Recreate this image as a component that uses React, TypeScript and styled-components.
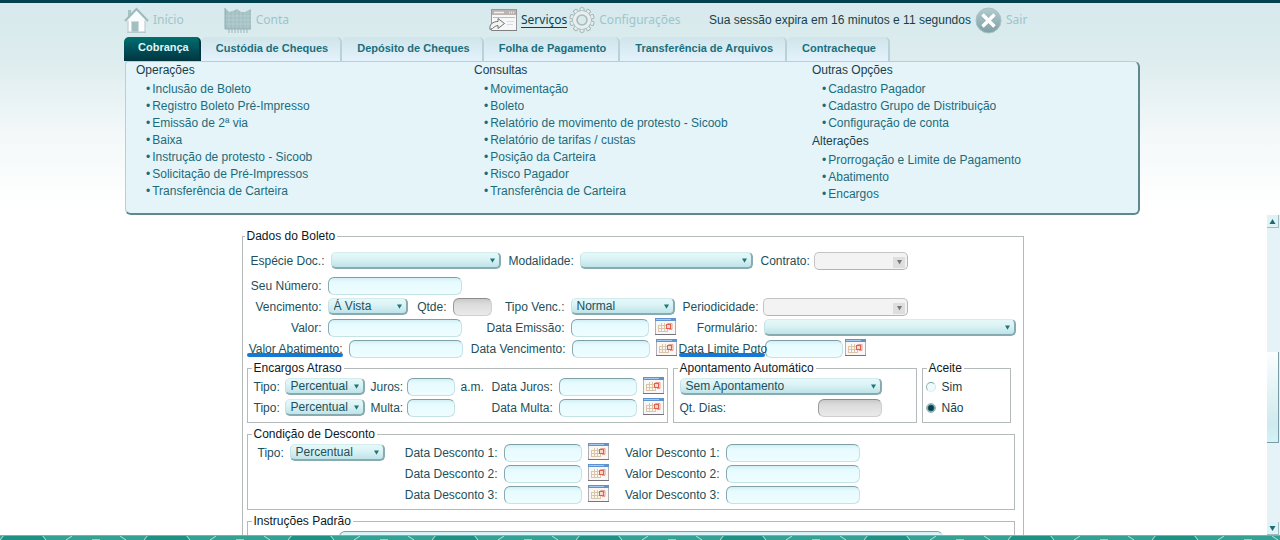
import React, { useId, useState } from 'react';
import styled, { createGlobalStyle, css } from 'styled-components';

const GlobalStyle = createGlobalStyle`
  *, *::before, *::after { box-sizing: border-box; }
  body {
    margin: 0;
    background: #fff;
    color: #21505c;
    font: 12px/14px "Liberation Sans", Arial, sans-serif;
  }
  button, input, select { font: inherit; color: inherit; }
`;

const Page = styled.div`
  display: flex;
  flex-direction: column;
  height: 100vh;
  overflow: hidden;
  border-top: 3px solid #00434f;
  background: linear-gradient(#d6e9ec, #deedef 60px, #f3f8f9 130px, #fff 205px);
`;

const Header = styled.header`
  flex: none;
  padding: 0 16px 0 0;
`;

const HeaderInner = styled.div`
  max-width: 1016px;
  margin: 0 auto;
`;

const TopNav = styled.nav`
  display: flex;
  align-items: center;
  height: 34px;
`;

const NavGroup = styled.div<{ $gap: number; $width: number }>`
  display: flex;
  align-items: center;
  gap: ${(p) => p.$gap}px;
  width: ${(p) => p.$width}px;
`;

const NavLink = styled.a<{ $active?: boolean }>`
  display: flex;
  align-items: center;
  gap: 4px;
  color: #9cc6cb;
  font: 12px/15px "Noto Sans", "Open Sans", sans-serif;
  text-decoration: none;
  white-space: nowrap;
  span {
    color: ${(p) => (p.$active ? '#0b4352' : 'inherit')};
    border-bottom: 1px solid ${(p) => (p.$active ? '#0b4352' : 'transparent')};
  }
`;

const Session = styled.span`
  width: 266px;
  color: #173f4b;
  white-space: nowrap;
`;

const Tabs = styled.div`
  display: flex;
  height: 24px;
`;

const Tab = styled.button<{ $active?: boolean }>`
  border: 0;
  border-right: 2px solid #b9d2d9;
  border-radius: 5px 5px 0 0;
  padding: 0 12px 2px 15px;
  background: linear-gradient(#cfe5ea, #e4f2fc);
  color: #1b6f7c;
  font-size: 11px;
  font-weight: bold;
  white-space: nowrap;
  ${(p) =>
    p.$active &&
    css`
      border-right-color: #003640;
      padding: 0 10px 5px 14px;
      background: linear-gradient(#00706f, #004b55 60%, #003640);
      color: #e3f4f6;
    `}
`;

const MenuPanel = styled.div`
  display: grid;
  grid-template-columns: 338fr 338fr 336fr;
  height: 154px;
  margin-left: 1px;
  background: #e5f4f9;
  border: solid #b5d0d6;
  border-width: 1px 2px 2px 1px;
  border-right-color: #5f888e;
  border-bottom-color: #5f888e;
  border-radius: 3px 6px 6px 6px;
`;

const MenuColumn = styled.div`
  padding-left: 10px;
`;

const MenuHeading = styled.h2`
  margin: 0 0 2px;
  font-size: 12px;
  line-height: 17px;
  font-weight: normal;
  color: #173f4b;
`;

const MenuList = styled.ul`
  margin: 0 0 1px;
  padding: 0 0 0 10px;
  list-style: none;
  line-height: 17px;
`;

const MenuLink = styled.a`
  display: flex;
  gap: 2px;
  color: #1b6c7a;
  text-decoration: none;
`;

const Body = styled.div`
  display: flex;
  flex: 1;
  min-height: 0;
`;

const FormArea = styled.main`
  flex: 1;
  min-width: 0;
  overflow: hidden;
  padding: 14px 2px 0 0;
`;

const Group = styled.fieldset`
  min-width: 0;
  margin: 0;
  padding: 1px 0 4px 6px;
  border: 1px solid #b4b9ba;
`;

const MainGroup = styled(Group)`
  max-width: 782px;
  margin: 0 auto;
  padding: 7px 8px 0 4px;
`;

const Legend = styled.legend`
  margin-left: -2px;
  padding: 0 2px;
  color: #0c1a1f;
`;

const Row = styled.div<{ $gap?: number; $after?: number }>`
  display: flex;
  align-items: center;
  gap: ${(p) => p.$gap ?? 8}px;
  height: 21px;
  margin-bottom: ${(p) => p.$after ?? 0}px;
`;

const GroupRow = styled.div`
  display: grid;
  grid-template-columns: 421fr 244fr 89fr;
  gap: 5px;
  margin: 2px 4px 4px 0;
`;

const Section = styled(Group)`
  margin-bottom: 4px;
`;

const DiscountLayout = styled.div`
  display: flex;
  align-items: flex-start;
  gap: 8px;
  padding-left: 4px;
`;

const FieldBox = styled.div<{ $gap: number }>`
  display: flex;
  align-items: center;
  gap: ${(p) => p.$gap}px;
`;

const Label = styled.label<{ $width?: number; $marked?: boolean }>`
  position: relative;
  width: ${(p) => (p.$width ? `${p.$width}px` : 'auto')};
  text-align: right;
  white-space: nowrap;
  ${(p) =>
    p.$marked &&
    css`
      &::after {
        content: '';
        position: absolute;
        left: 0;
        right: 0;
        bottom: -1px;
        height: 4px;
        border-radius: 2px;
        background: #1378d6;
      }
    `}
`;

const TextBox = styled.input<{ $width: number }>`
  width: ${(p) => p.$width}px;
  height: 18px;
  padding: 0 5px;
  border: 1px solid;
  border-color: #7d9fa5 #c3e3e6 #c3e3e6 #86aab0;
  border-radius: 6px;
  background: linear-gradient(#d3eff3, #e6fbff 4px, #effdff);
  &:disabled {
    border-color: #8c8c8c #cfcfcf #cfcfcf #9a9a9a;
    background: linear-gradient(#c9c9c9, #dcdcdc 5px, #eaeaea);
  }
`;

const SelectWrap = styled.span<{ $width: number }>`
  position: relative;
  width: ${(p) => p.$width}px;
  svg {
    position: absolute;
    right: 6px;
    top: 6px;
    pointer-events: none;
  }
`;

const DisabledSelectWrap = styled(SelectWrap)`
  svg {
    right: 3px;
    top: 5px;
  }
`;

const SelectBox = styled.select`
  display: block;
  width: 100%;
  height: 17px;
  padding: 0 5px;
  appearance: none;
  border: solid;
  border-width: 1px 2px 2px 1px;
  border-color: #d3ecee #86abb1 #86abb1 #c4e2e5;
  border-radius: 5px;
  background: linear-gradient(#e6f8f9, #dcf3f5 40%, #bfe3e8);
  line-height: 14px;
  &:disabled {
    height: 18px;
    border-width: 1px;
    border-color: #c4c4c4 #b4b4b4 #b4b4b4 #c4c4c4;
    background: #f3f3f3;
    opacity: 1;
  }
`;

const CalendarButton = styled.button`
  height: 19px;
  padding: 0 0 2px;
  border: 0;
  background: none;
  svg { display: block; }
`;

const Unit = styled.span`
  width: 25px;
`;

const Spread = styled.div`
  display: flex;
  align-items: center;
  justify-content: space-between;
  width: 202px;
`;

const RadioLabel = styled.label`
  display: flex;
  align-items: center;
  gap: 6px;
  margin-left: -3px;
  color: #173f4b;
`;

const Radio = styled.input`
  appearance: none;
  width: 10px;
  height: 10px;
  margin: 0;
  border: 1px solid;
  border-color: #7fa3a9 #cfe8ea #d6eef0 #8fb3b8;
  border-radius: 50%;
  background: #eefbfd;
  &:checked {
    border-color: #8fb3b8;
    background: radial-gradient(circle, #0b3e4a 0 2px, #2b6570 3px, #c5e3e7 4px);
  }
`;

const Instruction = styled.div`
  padding: 2px 71px 0 85px;
`;

const InstructionBox = styled(TextBox)`
  display: block;
  width: 100%;
`;

const Scrollbar = styled.div`
  display: flex;
  flex-direction: column;
  flex: none;
  width: 13px;
  background: #e5f3f8;
`;

const ScrollButton = styled.button`
  display: flex;
  align-items: center;
  justify-content: center;
  flex: none;
  width: 12px;
  height: 13px;
  padding: 0;
  border: solid #9fbcc2;
  border-width: 0 1px 1px 0;
  background: #dff2f5;
`;

const ScrollSpace = styled.div<{ $share: number }>`
  flex: ${(p) => p.$share};
`;

const ScrollThumb = styled.div`
  flex: 91;
  width: 12px;
  border: solid #7a9ba3;
  border-width: 0 1px 1px 0;
  background: linear-gradient(#fbfefe, #cfeaee 80%, #d2f3f6);
`;

const Footer = styled.footer`
  flex: none;
  height: 5px;
  svg { display: block; }
`;

function HomeIcon() {
  return (
    <svg width="25" height="26" viewBox="0 0 25 26" aria-hidden="true">
      <path d="M4 12h17v13H4z" fill="#fcfdfd" stroke="#b5c8ca" />
      <path d="M4 3h3v7H4z" fill="#a9c2c4" />
      <path d="M12.500 2.500 23 13.500H2z" fill="#f8fcfc" />
      <path d="M1 14 12.500 2 24 14" fill="none" stroke="#9fbabd" strokeWidth="2.200" />
      <path d="M7.500 14.500h7v10.500h-7z" fill="#a4bfc1" stroke="#cfdcdd" />
      <path d="M3 25.500h19" stroke="#b4cccd" />
    </svg>
  );
}

function AccountIcon() {
  return (
    <svg width="28" height="28" viewBox="0 0 28 28" aria-hidden="true">
      <path d="M1 2 5 6 9 5l4-2 4 3 4 0 6-3v20H1z" fill="#a3bfc2" />
      <path d="M1 10h26M1 14h26M1 18h26M5 6v17M9 5v18M13 4v19M17 6v17M21 6v17M24 5v18" stroke="#b4cdcf" />
      <path d="M1 2v21h26" fill="none" stroke="#8fafb2" />
      <path d="M5 23v4M8 23v4M11 23v4M14 23v4M17 23v4M20 23v4M23 23v4" stroke="#9ab6b9" />
    </svg>
  );
}

function ServicesIcon() {
  return (
    <svg width="28" height="24" viewBox="0 0 28 24" aria-hidden="true">
      <rect x="2.500" y="1.500" width="25" height="21" fill="#f7f7f8" stroke="#97999b" />
      <path d="M3 2h24v5H3z" fill="#b9b4b2" />
      <path d="M5 4.500h10M20 4.500h1M22 4.500h1M24 4.500h1" stroke="#f1eeee" strokeWidth="1.500" />
      <path d="M4 9.500h22" stroke="#a9c0e4" />
      <path d="M18 13.500h7M18 16.500h6" stroke="#d5daee" />
      <path d="M3 22.500h25" stroke="#7c7e80" />
      <path d="M1 21.500c-1-5 3-8 8-8v-3l6.500 5-6.500 5v-3c-3.500 0-4 3-8 4z" fill="#f4f4f4" stroke="#6f7375" />
    </svg>
  );
}

function GearIcon() {
  const teeth = Array.from({ length: 10 }, (_, i) => i * 36);
  return (
    <svg width="26" height="26" viewBox="0 0 26 26" aria-hidden="true">
      {teeth.map((angle) => (
        <rect key={angle} x="11" y="0.700" width="4" height="6" rx="1" fill="#e8eff0" stroke="#a2b5b7" transform={`rotate(${angle} 13 13)`} />
      ))}
      <circle cx="13" cy="13" r="9.200" fill="none" stroke="#a2b5b7" />
      <circle cx="13" cy="13" r="9" fill="#e8eff0" />
      <circle cx="13" cy="13" r="5" fill="#d9eaec" stroke="#a9babc" strokeWidth="1.600" />
    </svg>
  );
}

function ExitIcon() {
  return (
    <svg width="27" height="27" viewBox="0 0 27 27" aria-hidden="true">
      <defs>
        <linearGradient id="exit-fill" x2="0" y2="1">
          <stop stopColor="#b4cccf" />
          <stop offset="1" stopColor="#7d9fa5" />
        </linearGradient>
      </defs>
      <circle cx="13.500" cy="13.500" r="12.500" fill="url(#exit-fill)" stroke="#a7c2c5" />
      <path d="m7.500 7.500 12 12M19.500 7.500l-12 12" stroke="#fff" strokeWidth="3.400" />
    </svg>
  );
}

function CalendarIcon() {
  return (
    <svg width="21" height="17" viewBox="0 0 21 17" aria-hidden="true">
      <rect x=".5" y=".5" width="20" height="16" fill="#f8f6f6" stroke="#b3aeb4" />
      <path d="M0 0h21v3H0z" fill="#5c93d0" />
      <path d="M1 1.500h15" stroke="#a6c8ec" />
      <path d="M0 16.500h21" stroke="#77737a" />
      <path d="M3 7.500h14M3 10.500h14M3 13.500h10M3.500 7v7M6.500 5v9M9.500 5v9M12.500 5v9" fill="none" stroke="#dcc5a5" />
      <path d="M13 5.500h4v6h-3" fill="none" stroke="#e8a092" />
      <rect x="11.500" y="6.500" width="4" height="4" fill="#fbd5cf" stroke="#e0604e" />
    </svg>
  );
}

function Arrow({ disabled }: { disabled?: boolean }) {
  if (disabled) {
    return (
      <svg width="12" height="11" viewBox="0 0 12 11" aria-hidden="true">
        <path d="M0 0h12v11H0z" fill="#dedede" />
        <path d="M4 3h5L6.500 7.500z" fill="#777" />
      </svg>
    );
  }
  return (
    <svg width="5" height="5" viewBox="0 0 5 5" aria-hidden="true">
      <path d="M0 .5h5L2.500 4.800z" fill="#1b777b" />
    </svg>
  );
}

type FieldProps = {
  label: string;
  labelWidth?: number;
  width: number;
  options?: string[];
  disabled?: boolean;
  date?: boolean;
  marked?: boolean;
  gap?: number;
  children?: React.ReactNode;
};

function DateButton({ label }: { label: string }) {
  return (
    <CalendarButton type="button" aria-label={`Calendário ${label}`}>
      <CalendarIcon />
    </CalendarButton>
  );
}

function Field({ label, labelWidth, width, options, disabled, date, marked, gap = 6, children }: FieldProps) {
  const id = useId();
  const Wrap = disabled ? DisabledSelectWrap : SelectWrap;
  return (
    <FieldBox $gap={gap}>
      <Label htmlFor={id} $width={labelWidth} $marked={marked}>{label}</Label>
      {options ? (
        <Wrap $width={width}>
          <SelectBox id={id} disabled={disabled}>
            {options.map((o) => <option key={o}>{o}</option>)}
          </SelectBox>
          <Arrow disabled={disabled} />
        </Wrap>
      ) : (
        <TextBox id={id} $width={width} disabled={disabled} />
      )}
      {date && <DateButton label={label} />}
      {children}
    </FieldBox>
  );
}

const tabs = ['Cobrança', 'Custódia de Cheques', 'Depósito de Cheques', 'Folha de Pagamento', 'Transferência de Arquivos', 'Contracheque'];

const menu = [
  [{
    title: 'Operações',
    items: ['Inclusão de Boleto', 'Registro Boleto Pré-Impresso', 'Emissão de 2ª via', 'Baixa', 'Instrução de protesto - Sicoob', 'Solicitação de Pré-Impressos', 'Transferência de Carteira'],
  }],
  [{
    title: 'Consultas',
    items: ['Movimentação', 'Boleto', 'Relatório de movimento de protesto - Sicoob', 'Relatório de tarifas / custas', 'Posição da Carteira', 'Risco Pagador', 'Transferência de Carteira'],
  }],
  [
    { title: 'Outras Opções', items: ['Cadastro Pagador', 'Cadastro Grupo de Distribuição', 'Configuração de conta'] },
    { title: 'Alterações', items: ['Prorrogação e Limite de Pagamento', 'Abatimento', 'Encargos'] },
  ],
];

export default function App() {
  const [accept, setAccept] = useState('Não');
  const daysId = useId();
  return (
    <Page>
      <GlobalStyle />
      <Header>
        <HeaderInner>
          <TopNav>
            <NavGroup $gap={40} $width={365}>
              <NavLink href="#inicio"><HomeIcon /><span>Início</span></NavLink>
              <NavLink href="#conta"><AccountIcon /><span>Conta</span></NavLink>
            </NavGroup>
            <NavGroup $gap={2} $width={220}>
              <NavLink href="#servicos" $active><ServicesIcon /><span>Serviços</span></NavLink>
              <NavLink href="#configuracoes"><GearIcon /><span>Configurações</span></NavLink>
            </NavGroup>
            <Session>Sua sessão expira em 16 minutos e 11 segundos</Session>
            <NavLink href="#sair"><ExitIcon /><span>Sair</span></NavLink>
          </TopNav>
          <Tabs role="tablist">
            {tabs.map((t, i) => (
              <Tab key={t} type="button" role="tab" aria-selected={i === 0} $active={i === 0}>{t}</Tab>
            ))}
          </Tabs>
          <MenuPanel>
            {menu.map((column, i) => (
              <MenuColumn key={i}>
                {column.map((s) => (
                  <section key={s.title}>
                    <MenuHeading>{s.title}</MenuHeading>
                    <MenuList>
                      {s.items.map((item) => (
                        <li key={item}><MenuLink href="#menu"><span>•</span><span>{item}</span></MenuLink></li>
                      ))}
                    </MenuList>
                  </section>
                ))}
              </MenuColumn>
            ))}
          </MenuPanel>
        </HeaderInner>
      </Header>

      <Body>
        <FormArea>
          <MainGroup>
            <Legend>Dados do Boleto</Legend>
            <Row $after={4}>
              <Field label="Espécie Doc.:" labelWidth={78} width={170} options={['']} />
              <Field label="Modalidade:" labelWidth={65} width={173} options={['']} />
              <Field label="Contrato:" labelWidth={47} width={94} options={['']} disabled />
            </Row>
            <Row>
              <Field label="Seu Número:" labelWidth={75} width={134} />
            </Row>
            <Row>
              <Field label="Vencimento:" labelWidth={75} width={80} options={['Á Vista']} />
              <Field label="Qtde:" labelWidth={31} width={39} disabled />
              <Field label="Tipo Venc.:" labelWidth={65} width={104} options={['Normal']} />
              <Field label="Periodicidade:" labelWidth={74} width={145} options={['']} disabled />
            </Row>
            <Row>
              <Field label="Valor:" labelWidth={75} width={134} />
              <Field label="Data Emissão:" labelWidth={95} width={78} date />
              <Field label="Formulário:" labelWidth={74} width={252} options={['']} />
            </Row>
            <Row $gap={2}>
              <Field label="Valor Abatimento:" labelWidth={96} width={114} marked />
              <Field label="Data Vencimento:" labelWidth={101} width={78} date />
              <Field label="Data Limite Pgto" labelWidth={86} width={78} gap={0} marked />
              <DateButton label="Data Limite Pgto" />
            </Row>

            <GroupRow>
              <Group>
                <Legend>Encargos Atraso</Legend>
                <Row $gap={6}>
                  <Field label="Tipo:" labelWidth={25} width={80} options={['Percentual']} />
                  <Field label="Juros:" labelWidth={30} width={48}><Unit>a.m.</Unit></Field>
                  <Field label="Data Juros:" labelWidth={61} width={78} date />
                </Row>
                <Row $gap={6}>
                  <Field label="Tipo:" labelWidth={25} width={80} options={['Percentual']} />
                  <Field label="Multa:" labelWidth={30} width={48}><Unit /></Field>
                  <Field label="Data Multa:" labelWidth={61} width={78} date />
                </Row>
              </Group>
              <Group>
                <Legend>Apontamento Automático</Legend>
                <Row>
                  <SelectWrap $width={202}>
                    <SelectBox aria-label="Apontamento Automático"><option>Sem Apontamento</option></SelectBox>
                    <Arrow />
                  </SelectWrap>
                </Row>
                <Row>
                  <Spread>
                    <Label htmlFor={daysId}>Qt. Dias:</Label>
                    <TextBox id={daysId} $width={64} disabled />
                  </Spread>
                </Row>
              </Group>
              <Group>
                <Legend>Aceite</Legend>
                {['Sim', 'Não'].map((v) => (
                  <Row key={v}>
                    <RadioLabel>
                      <Radio type="radio" name="aceite" checked={accept === v} onChange={() => setAccept(v)} />
                      {v}
                    </RadioLabel>
                  </Row>
                ))}
              </Group>
            </GroupRow>

            <Section>
              <Legend>Condição de Desconto</Legend>
              <DiscountLayout>
                <Row>
                  <Field label="Tipo:" labelWidth={26} width={95} options={['Percentual']} />
                </Row>
                <div>
                  {[1, 2, 3].map((n) => (
                    <Row key={n}>
                      <Field label={`Data Desconto ${n}:`} labelWidth={105} width={78} date />
                      <Field label={`Valor Desconto ${n}:`} labelWidth={103} width={134} />
                    </Row>
                  ))}
                </div>
              </DiscountLayout>
            </Section>

            <Section>
              <Legend>Instruções Padrão</Legend>
              <Instruction>
                <InstructionBox $width={603} aria-label="Instruções Padrão" />
              </Instruction>
            </Section>
          </MainGroup>
        </FormArea>
        <Scrollbar>
          <ScrollButton type="button" aria-label="Rolar para cima">
            <svg width="7" height="5" viewBox="0 0 7 5"><path d="M3.500 0 6.500 5h-6z" fill="#1b6b75" /></svg>
          </ScrollButton>
          <ScrollSpace $share={124} />
          <ScrollThumb />
          <ScrollSpace $share={79} />
          <ScrollButton type="button" aria-label="Rolar para baixo">
            <svg width="7" height="5" viewBox="0 0 7 5"><path d="M.5 0h6l-3 5z" fill="#1b6b75" /></svg>
          </ScrollButton>
        </Scrollbar>
      </Body>

      <Footer>
        <svg width="100%" height="5" aria-hidden="true">
          <defs>
            <pattern id="weave" width="144" height="5" patternUnits="userSpaceOnUse">
              <path d="M0 0h144v5H0z" fill="#33a294" />
              <path d="M4 0h38l4 5H0z" fill="#1f9184" />
              <path d="M0 5 4 0M42 0l4 5M66 5l6-4M120 1l6 4" fill="none" stroke="#b5e6dd" />
              <path d="M92 4.500h8" stroke="#8fd3c8" />
              <path d="M0 .5h144" stroke="#5fbdb0" />
            </pattern>
          </defs>
          <rect width="100%" height="5" fill="url(#weave)" />
        </svg>
      </Footer>
    </Page>
  );
}
